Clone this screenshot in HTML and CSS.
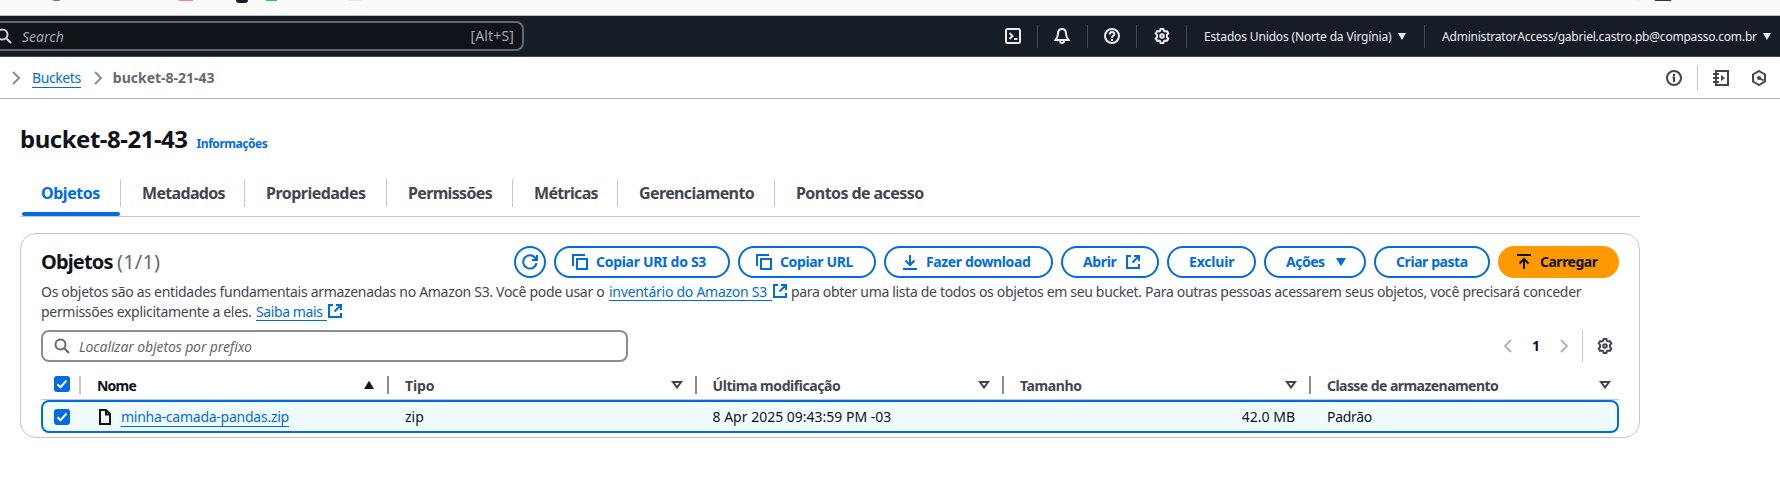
FILE: index.html
```html
<!DOCTYPE html>
<html lang="pt-BR">
<head>
<meta charset="utf-8">
<title>bucket-8-21-43</title>
<link rel="stylesheet" href="styles.css">
</head>
<body>
<svg class="defs" width="0" height="0">
  <symbol id="gear" viewBox="0 0 16 16"><path d="M6.600 1h2.800l.5 1.900 1.100.65 1.900-.5 1.400 2.400-1.350 1.400v2.300l1.350 1.400-1.400 2.400-1.900-.5-1.100.65L9.400 15H6.600l-.5-1.900-1.100-.65-1.900.5-1.400-2.400 1.350-1.400v-2.300L1.700 5.450l1.400-2.400 1.900.5 1.100-.65z"/><circle cx="8" cy="8" r="1.800"/></symbol>
  <symbol id="search" viewBox="0 0 16 16"><circle cx="6.500" cy="6.500" r="5"/><path d="M10.200 10.200 15 15"/></symbol>
  <symbol id="external" viewBox="0 0 16 16"><path d="M6 2H2v12h12v-4M9 2h5v5M14 2 7.500 8.500"/></symbol>
  <symbol id="copy" viewBox="0 0 16 16"><path d="M1 12V1h12M5 5h10v10H5z"/></symbol>
  <symbol id="chevron" viewBox="0 0 16 16"><path d="m5 2 6 6-6 6"/></symbol>
  <symbol id="sort" viewBox="0 0 16 16"><path d="M4 5h8l-4 5.500z"/></symbol>
  <symbol id="caret" viewBox="0 0 16 16"><path class="solid" d="M3 4h10L8 12.300z"/></symbol>
</svg>

<div class="bookmarks">
  <i class="bm indigo"></i><i class="bm pink"></i><i class="bm dark"></i><i class="bm green"></i><i class="bm pale"></i><i class="bm sep"></i><i class="bm folder"></i>
</div>

<header class="topnav">
  <div class="global-search">
    <svg class="icon"><use href="#search"/></svg>
    <span class="placeholder">Search</span>
    <span class="shortcut">[Alt+S]</span>
  </div>
  <nav class="tools">
    <span class="tool"><svg class="icon" viewBox="0 0 16 16"><rect x="1" y="1" width="14" height="14" rx="1.500"/><path d="m4.500 5 3 3-3 3M9 11h3.500"/></svg></span>
    <span class="tool"><svg class="icon" viewBox="0 0 16 16"><path d="M8 1C5.300 1 4 3 4 5.500c0 3-.8 4.500-2.500 6.500h13C12.800 10 12 8.500 12 5.500 12 3 10.700 1 8 1zM6 13c0 2.700 4 2.700 4 0"/></svg></span>
    <span class="tool"><svg class="icon" viewBox="0 0 16 16"><circle cx="8" cy="8" r="7"/><path d="M5.700 6.500C5.700 3 10.500 3.300 10.300 6.200 10.200 7.800 8 7.700 8 9.800M8 11v2"/></svg></span>
    <span class="tool"><svg class="icon"><use href="#gear"/></svg></span>
    <span class="menu region"><span class="label">Estados Unidos (Norte da Virgínia)</span><i class="tri"></i></span>
    <span class="menu account"><span class="label">AdministratorAccess/gabriel.castro.pb@compasso.com.br</span><i class="tri"></i></span>
  </nav>
</header>

<div class="crumbs">
  <svg class="icon"><use href="#chevron"/></svg>
  <a class="link crumb-link">Buckets</a>
  <svg class="icon"><use href="#chevron"/></svg>
  <b class="current">bucket-8-21-43</b>
  <div class="panel-tools">
    <svg class="icon" viewBox="0 0 16 16"><circle cx="8" cy="8" r="7"/><path d="M8 4v2M6.500 7.500H8V12"/></svg>
    <i class="rule"></i>
    <svg class="icon" viewBox="0 0 16 16"><path d="M3 3V1h12v14H3v-2M0 4h6M0 8h6M0 12h6M3 3v10"/><path class="solid" d="M8 5v6l4-3z"/></svg>
    <svg class="icon" viewBox="0 0 16 16"><path d="m8 1 6 3.500v7L8 15l-6-3.500v-7z"/><circle class="solid" cx="8" cy="8" r="2"/><path d="m8 8 4.500 2.500"/></svg>
  </div>
</div>

<main>
  <div class="title"><h1>bucket-8-21-43</h1><b class="info">Informações</b></div>
  <div class="tabs">
    <span class="tab active t-objetos"><b>Objetos</b></span>
    <span class="tab t-metadados"><b>Metadados</b></span>
    <span class="tab t-propriedades"><b>Propriedades</b></span>
    <span class="tab t-permissoes"><b>Permissões</b></span>
    <span class="tab t-metricas"><b>Métricas</b></span>
    <span class="tab t-gerenciamento"><b>Gerenciamento</b></span>
    <span class="tab t-pontos"><b>Pontos de acesso</b></span>
  </div>

  <section class="card">
    <div class="card-head">
      <h2>Objetos <span>(1/1)</span></h2>
      <div class="actions">
        <button class="btn refresh"><svg class="icon" viewBox="0 0 16 16"><path d="M14.500 9A6.700 6.700 0 1 1 13.500 4.200L15 6M15 1v5h-5"/></svg></button>
        <button class="btn uri"><svg class="icon"><use href="#copy"/></svg><span>Copiar URI do S3</span></button>
        <button class="btn url"><svg class="icon"><use href="#copy"/></svg><span>Copiar URL</span></button>
        <button class="btn download"><svg class="icon" viewBox="0 0 16 16"><path d="M8 1v10M3.500 6.500 8 11l4.500-4.500M1 15h14"/></svg><span>Fazer download</span></button>
        <button class="btn open"><span>Abrir</span><svg class="icon"><use href="#external"/></svg></button>
        <button class="btn delete"><span>Excluir</span></button>
        <button class="btn more"><span>Ações</span><svg class="icon"><use href="#caret"/></svg></button>
        <button class="btn folder-new"><span>Criar pasta</span></button>
        <button class="btn primary"><svg class="icon" viewBox="0 0 16 16"><path d="M1 1h14M8 15V5M3.500 9.500 8 5l4.500 4.500"/></svg><span>Carregar</span></button>
      </div>
    </div>
    <div class="desc">
      <p><span class="d1">Os objetos são as entidades fundamentais armazenadas no Amazon S3. Você pode usar o</span><a class="link d2">inventário do Amazon S3</a><svg class="icon ext"><use href="#external"/></svg><span class="d3">para obter uma lista de todos os objetos em seu bucket. Para outras pessoas acessarem seus objetos, você precisará conceder</span></p>
      <p><span class="d4">permissões explicitamente a eles.</span><a class="link d5">Saiba mais</a><svg class="icon ext"><use href="#external"/></svg></p>
    </div>
    <div class="filter-row">
      <div class="filter"><svg class="icon"><use href="#search"/></svg><span>Localizar objetos por prefixo</span></div>
      <div class="pager">
        <svg class="icon off flip"><use href="#chevron"/></svg><b>1</b><svg class="icon off"><use href="#chevron"/></svg><i class="rule"></i><svg class="icon"><use href="#gear"/></svg>
      </div>
    </div>
    <div class="row head">
      <div class="cell pick"><i class="check"><svg viewBox="0 0 16 16"><path d="m3.500 8.200 3 3L12.500 4.500"/></svg></i></div>
      <div class="cell sorted"><b>Nome</b><svg class="icon up"><use href="#caret"/></svg></div>
      <div class="cell type"><b>Tipo</b><svg class="icon"><use href="#sort"/></svg></div>
      <div class="cell modified"><b>Última modificação</b><svg class="icon"><use href="#sort"/></svg></div>
      <div class="cell"><b>Tamanho</b><svg class="icon"><use href="#sort"/></svg></div>
      <div class="cell storage"><b>Classe de armazenamento</b><svg class="icon"><use href="#sort"/></svg></div>
    </div>
    <div class="row data">
      <div class="cell pick"><i class="check"><svg viewBox="0 0 16 16"><path d="m3.500 8.200 3 3L12.500 4.500"/></svg></i></div>
      <div class="cell"><svg class="icon file" viewBox="0 0 16 16"><path d="M3 1h6l4 4v10H3zM9 1v4.500h4"/></svg><a class="link name">minha-camada-pandas.zip</a></div>
      <div class="cell"><span>zip</span></div>
      <div class="cell"><span>8 Apr 2025 09:43:59 PM -03</span></div>
      <div class="cell size"><span>42.0 MB</span></div>
      <div class="cell class-value"><span>Padrão</span></div>
    </div>
  </section>
</main>
</body>
</html>
```
FILE: styles.css
```css
* { box-sizing: border-box; }
body { margin: 0; width: 1780px; height: 486px; overflow: hidden; background: #fff; color: #0f141a; font: 14px/20px "Noto Sans", "Open Sans", sans-serif; }
.defs { display: block; position: absolute; }
h1, h2, p { margin: 0; }
span, b, a { white-space: nowrap; }
.icon { width: 16px; height: 16px; flex: none; fill: none; stroke: currentColor; stroke-width: 2; display: block; }
.solid { fill: currentColor; stroke: none; }
.link { color: #006ce0; border-bottom: 1px solid #006ce0; }

.bookmarks { height: 16px; background: #fafafa; border-bottom: 1px solid #b8c0c4; display: flex; align-items: flex-start; }
.bm { display: block; height: 1px; flex: none; }
.indigo { width: 7px; margin-left: 53px; background: #6b6fb5; border-radius: 0 0 3px 3px; }
.pink { width: 14px; margin-left: 119px; background: #ff7d98; }
.dark { width: 12px; height: 3px; margin-left: 43px; background: #1d1b33; border-radius: 0 0 6px 6px; }
.green { width: 11px; margin-left: 18px; background: #1fc84a; }
.pale { width: 13px; margin-left: 71px; background: #e3ebf8; }
.sep { width: 1px; height: 2px; margin-left: 1277px; background: #ddd; }
.folder { width: 16px; margin-left: 16px; background: #333; }

.topnav { height: 41px; background: #161d26; border-bottom: 1px solid #424650; display: flex; justify-content: space-between; align-items: flex-start; color: #ebebf0; }
.global-search { margin: 5px 0 0 -10px; width: 534px; height: 30px; border: 2px solid #656871; border-radius: 8px; background: #0f141a; display: flex; align-items: center; padding: 0 8px 0 4px; color: #a4a4ad; }
.global-search .icon { color: #d0d0d6; }
.placeholder { font-style: italic; margin-left: 10px; padding-top: 2px; }
.shortcut { margin-left: auto; letter-spacing: 0.15px; }
.tools { display: flex; align-items: center; height: 40px; }
.tool { width: 49.700px; height: 23px; display: flex; align-items: center; justify-content: center; border-right: 1px solid #424650; }
.menu { height: 23px; display: flex; align-items: center; font-size: 12px; }
.label { padding-top: 1px; }
.region { width: 238px; padding-left: 17px; border-right: 1px solid #424650; letter-spacing: -0.15px; }
.account { width: 355px; padding-left: 17px; letter-spacing: -0.21px; }
.tri { border: 4px solid transparent; border-top: 7px solid #ebebf0; border-bottom: 0; margin-left: 6px; }

.crumbs { height: 42px; border-bottom: 1px solid #b4b4bb; display: flex; align-items: center; padding: 0 0 0 8px; }
.crumbs > .icon { color: #8c8c94; }
.crumb-link { margin: 1px 9px 0 8px; line-height: 18px; letter-spacing: -0.4px; }
.current { margin-left: 7px; padding-top: 1px; color: #656871; }
.panel-tools { margin-left: auto; display: flex; align-items: center; color: #424650; padding-right: 13px; }
.rule { width: 1px; height: 25px; background: #c6c6cd; }
.panel-tools .rule { margin: 0 15px; }
.panel-tools .icon + .icon { margin-left: 22px; }

main { width: 1640px; padding-left: 20px; }
.title { display: flex; align-items: baseline; height: 78px; padding-top: 25px; }
h1 { font-size: 24px; line-height: 30px; font-weight: 700; letter-spacing: -0.49px; }
.info { font-size: 12px; color: #006ce0; margin-left: 9px; letter-spacing: -0.46px; }
.tabs { height: 40px; display: flex; border-bottom: 1px solid #c6c6cd; color: #424650; font-size: 16px; }
.tab { height: 28px; margin-top: 2px; padding-left: 21px; display: flex; align-items: center; border-right: 1px solid #c6c6cd; }
.tab:last-child { border: 0; }
.t-objetos { width: 101px; letter-spacing: -0.45px; }
.t-metadados { width: 124px; letter-spacing: -0.68px; }
.t-propriedades { width: 142px; letter-spacing: -0.53px; }
.t-permissoes { width: 126px; letter-spacing: -0.66px; }
.t-metricas { width: 105px; letter-spacing: -0.68px; }
.t-gerenciamento { width: 157px; letter-spacing: -0.61px; }
.t-pontos { letter-spacing: -0.57px; }
.tab.active { position: relative; color: #006ce0; }
.tab.active::after { content: ""; position: absolute; left: 2px; right: 0; bottom: -9px; height: 4px; border-radius: 2px; background: #006ce0; }

.card { margin-top: 16px; height: 205px; border: 1px solid #c6c6cd; border-radius: 16px; padding: 12px 20px 0; }
.card-head { display: flex; justify-content: space-between; height: 32px; }
h2 { font-size: 20px; line-height: 32px; letter-spacing: -0.85px; }
h2 span { color: #656871; font-weight: 400; letter-spacing: 0.2px; }
.actions { display: flex; gap: 8px; }
.btn { height: 32px; border: 2px solid #006ce0; border-radius: 20px; background: #fff; color: #006ce0; font: 700 14px/20px "Noto Sans", sans-serif; display: flex; align-items: center; gap: 8px; padding: 0 0 0 20px; }
.refresh { width: 32px; padding: 0 0 0 6px; }
.uri { width: 176px; padding-left: 16px; letter-spacing: -0.3px; }
.url { width: 138px; padding-left: 16px; letter-spacing: -0.37px; }
.download { width: 169px; padding-left: 16px; letter-spacing: -0.38px; }
.open { width: 98px; letter-spacing: -0.35px; }
.delete { width: 89px; letter-spacing: -0.2px; }
.more { width: 102px; letter-spacing: -0.5px; }
.folder-new { width: 116px; letter-spacing: -0.43px; }
.primary { width: 121px; padding-left: 16px; background: #ff9900; border-color: #ff9900; color: #0f141a; letter-spacing: -0.5px; }
.desc { color: #424650; padding-top: 4px; }
.desc p { display: flex; height: 20px; }
.desc a { margin-left: 4px; height: 19px; line-height: 20px; }
.d1 { width: 564px; letter-spacing: -0.307px; }
.d2 { width: 163px; letter-spacing: -0.26px; }
.d3 { letter-spacing: -0.326px; }
.d4 { width: 211px; letter-spacing: -0.31px; }
.d5 { width: 71px; letter-spacing: -0.4px; }
.ext { color: #006ce0; margin: 1px 3px 0 0; }
.filter-row { display: flex; justify-content: space-between; margin-top: 8px; height: 32px; }
.filter { width: 587px; border: 2px solid #8c8c94; border-radius: 8px; display: flex; align-items: center; color: #656871; padding-left: 11px; gap: 9px; font-style: italic; letter-spacing: -0.12px; }
.filter span { padding-top: 2px; }
.pager { display: flex; align-items: center; padding-right: 6px; }
.pager .icon { color: #424650; }
.pager .icon.off { color: #b4b4bb; }
.flip { transform: scaleX(-1); }
.pager b { width: 40px; text-align: center; }
.pager .rule { height: 32px; margin: 0 14px 0 10px; }

.row { display: grid; grid-template-columns: 40px 308px 307.5px 307.5px 307px 1fr; }
.head { height: 30px; margin-top: 8px; padding-top: 6px; border-bottom: 1px solid #c6c6cd; color: #424650; letter-spacing: -0.4px; }
.cell { display: flex; align-items: center; padding-left: 16px; height: 18px; }
.head .cell { border-right: 2px solid #8c8c94; justify-content: space-between; padding-right: 10px; }
.head .cell:last-child { border: 0; padding-right: 6px; }
.head .cell.pick { padding: 0 0 2px 13px; border-color: #c6c6cd; }
.head b { padding-top: 1px; }
.head .sorted { color: #0f141a; letter-spacing: -0.8px; }
.type { letter-spacing: -0.1px; }
.modified { letter-spacing: -0.44px; }
.storage { letter-spacing: -0.55px; }
.up { transform: scaleY(-1); }
.check { width: 16px; height: 16px; border-radius: 3px; background: #006ce0; flex: none; display: block; }
.check svg { display: block; fill: none; stroke: #fff; stroke-width: 2; }
.data { grid-template-columns: 38px 308px 307.5px 307.5px 307px 1fr; align-items: center; height: 33px; border: 2px solid #006ce0; border-radius: 8px; background: #f0fbff; }
.data .pick { padding-left: 11px; }
.name { margin-left: 8px; line-height: 19px; letter-spacing: -0.25px; }
.size { justify-content: flex-end; padding-right: 16px; }
.class-value { letter-spacing: -0.3px; }
```
